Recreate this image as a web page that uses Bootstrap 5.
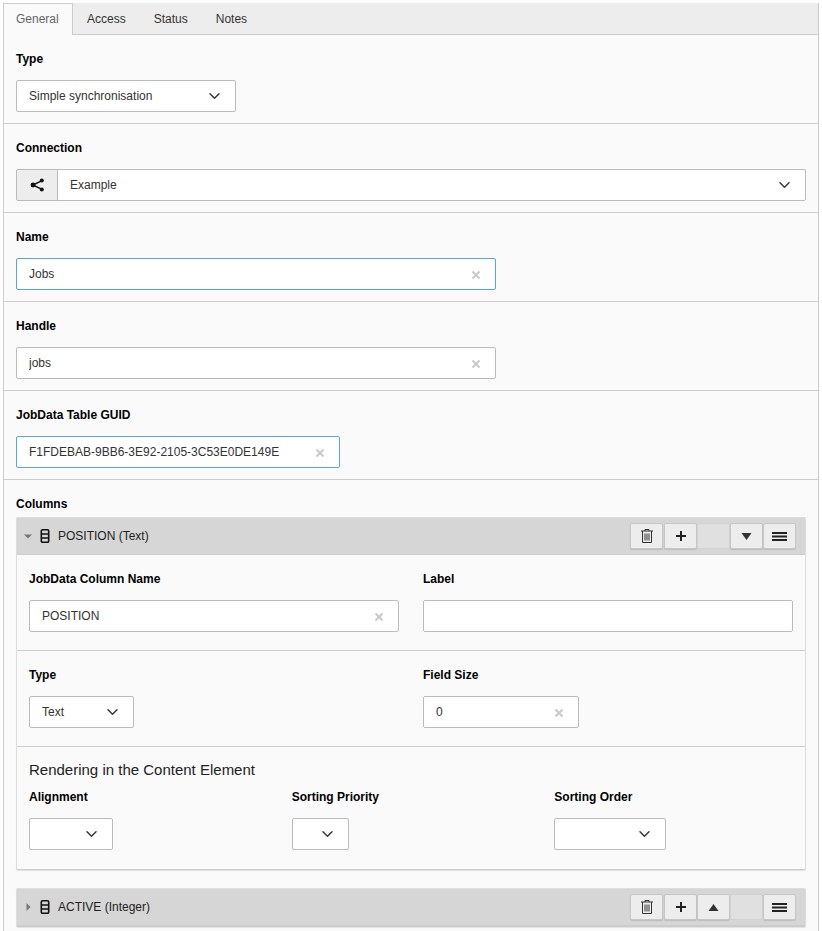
<!DOCTYPE html>
<html lang="en"><head><meta charset="utf-8"><title>Jobs</title>
<link href="https://cdn.jsdelivr.net/npm/bootstrap@5.3.0/dist/css/bootstrap.min.css" rel="stylesheet">
<style>
html,body{background:#fff;}
body{font-family:"Liberation Sans",Arial,sans-serif;font-size:12px;line-height:18px;color:#333;padding:3px 3px 0;margin:0;}
.frame{width:816px;background:#fafafa;border:solid #ccc;border-width:0 1px;}
.tabbar{background:#ededed;border:0;border-bottom:1px solid #ccc;height:32px;padding:0;flex-wrap:nowrap;}
.tabbar .nav-link{font-size:12px;line-height:18px;color:#333;padding:7px 14px 6px;border:0;border-radius:0;margin:0;height:32px;background:transparent;}
.tabbar .nav-link.active{color:#666;background:#fafafa;border:solid #ccc;border-width:1px 1px 0 0;height:32px;padding:6px 12px 7px 12px;width:69px;}
.sect{padding:15px 12px 11px;border-bottom:1px solid #ccc;height:89px;}
.sect.last{border-bottom:0;height:auto;padding-bottom:12px;}
.lbl{display:block;font-weight:700;color:#000;font-size:12px;line-height:18px;margin:0 0 12px;}
.lbl.colslbl{margin-bottom:4px;}
.form-select,.form-control{font-size:12px;line-height:18px;height:32px;padding:6px 12px;color:#333;border:1px solid #bbb;border-radius:2px;box-shadow:none;background-color:#fff;}
.form-select{background-size:15px 12px;background-position:right 13px center;padding-right:30px;}
.w-type{width:220px;}
.cbox{position:relative;}
.w-name{width:480px;}
.w-guid{width:324px;}
.w-size{width:156px;}
.w-text{width:105px;}
.w-align{width:84px;}
.w-prio{width:57px;}
.w-order{width:112px;}
.clr{position:absolute;right:15px;top:12px;width:10px;height:10px;}
.focusb{border-color:#5ba5dd;}
.conn .input-group-text{width:42px;height:32px;background:#ededed;border:1px solid #bbb;border-radius:2px 0 0 2px;justify-content:center;padding:0;}
.conn .form-select{border-radius:0 2px 2px 0;margin-left:-1px;}
.colpanel{--bs-card-border-color:#ccc;--bs-card-bg:#fafafa;--bs-card-border-radius:2px;--bs-card-inner-border-radius:1px;border:1px solid #ddd;border-bottom-color:#ccc;box-shadow:0 1px 1px rgba(0,0,0,.1);margin-bottom:18px;width:790px;}
.colhead{background:#d6d6d6;border:0;border-bottom:1px solid #ccc;height:37px;padding:0 9px 0 6px;color:#222;display:flex;align-items:center;}
.colhead .tri{width:10px;display:flex;justify-content:center;margin-right:7px;}
.colhead .ico{margin-right:8px;}
.toolbtns{margin-left:auto;display:flex;}
.tb{width:33px;height:26px;padding:0;background:#ededed;border:1px solid #c6c6c6;border-radius:2px;display:flex;align-items:center;justify-content:center;box-shadow:0 1px 1px rgba(0,0,0,.12);}
.tb.gapr{margin-right:1px;}
.tb.off{background:#e0e0e0;border-color:#d2d2d2;box-shadow:none;}
.inner{padding:15px 12px 18px;border-bottom:1px solid #ccc;height:96px;}
.inner.end{border-bottom:0;height:122px;padding-top:13px;}
.subhd{font-size:15px;line-height:20px;color:#222;margin:0 0 8px;font-weight:400;}
.collapsedp{margin-bottom:0;}
</style></head>
<body>
<div class="frame">
<ul class="nav nav-tabs tabbar">
<li class="nav-item"><a class="nav-link active" href="#">General</a></li>
<li class="nav-item"><a class="nav-link" href="#">Access</a></li>
<li class="nav-item"><a class="nav-link" href="#">Status</a></li>
<li class="nav-item"><a class="nav-link" href="#">Notes</a></li>
</ul>

<div class="sect"><label class="lbl">Type</label>
<select class="form-select w-type"><option>Simple synchronisation</option></select></div>

<div class="sect"><label class="lbl">Connection</label>
<div class="input-group conn"><span class="input-group-text">
<svg width="15" height="14" viewBox="0 0 15 14"><path d="M3 7 11.500 2.800M3 7l8.500 4.200" stroke="#111" stroke-width="1.400" fill="none"/><circle cx="3" cy="7" r="2.400" fill="#111"/><circle cx="11.800" cy="2.500" r="2" fill="#111"/><circle cx="11.800" cy="11.500" r="2" fill="#111"/></svg>
</span><select class="form-select"><option>Example</option></select></div></div>

<div class="sect"><label class="lbl">Name</label>
<div class="cbox w-name"><input class="form-control focusb" value="Jobs"><svg class="clr" viewBox="0 0 10 10"><path d="M1.500 1.500l7 7M8.500 1.500l-7 7" stroke="#c9c9c9" stroke-width="2" fill="none"/></svg></div></div>

<div class="sect"><label class="lbl">Handle</label>
<div class="cbox w-name"><input class="form-control" value="jobs"><svg class="clr" viewBox="0 0 10 10"><path d="M1.500 1.500l7 7M8.500 1.500l-7 7" stroke="#c9c9c9" stroke-width="2" fill="none"/></svg></div></div>

<div class="sect"><label class="lbl">JobData Table GUID</label>
<div class="cbox w-guid"><input class="form-control focusb" value="F1FDEBAB-9BB6-3E92-2105-3C53E0DE149E"><svg class="clr" viewBox="0 0 10 10"><path d="M1.500 1.500l7 7M8.500 1.500l-7 7" stroke="#c9c9c9" stroke-width="2" fill="none"/></svg></div></div>

<div class="sect last"><label class="lbl colslbl">Columns</label>

<div class="card colpanel">
<div class="colhead">
<span class="tri"><svg width="8" height="5" viewBox="0 0 8 5"><path d="M0 0.500h8L4 4.500z" fill="#777"/></svg></span>
<svg class="ico" width="10" height="14" viewBox="0 0 10 14"><path d="M2.500.8h5A1.200 1.200 0 0 1 8.700 2v10a1.200 1.200 0 0 1-1.200 1.200h-5A1.200 1.200 0 0 1 1.300 12V2A1.200 1.200 0 0 1 2.500.8zM1.300 5h7.400M1.300 9h7.400" stroke="#111" stroke-width="1.600" fill="none"/></svg>
<span>POSITION (Text)</span>
<div class="toolbtns">
<button type="button" class="tb gapr"><svg width="14" height="16" viewBox="0 0 14 16"><path d="M1 3h12M5 3V1.500h4V3M2.500 3v11.500h9V3M5 5.500v7M7 5.500v7M9 5.500v7" stroke="#333" stroke-width="1" fill="none"/></svg></button>
<button type="button" class="tb"><svg width="12" height="12" viewBox="0 0 12 12"><path d="M6 1v10M1 6h10" stroke="#222" stroke-width="2" fill="none"/></svg></button>
<button type="button" class="tb off"></button>
<button type="button" class="tb"><svg width="11" height="7" viewBox="0 0 11 7"><path d="M.5 0h10L5.500 7z" fill="#333"/></svg></button>
<button type="button" class="tb"><svg width="15" height="9" viewBox="0 0 15 9"><path d="M0 1h15M0 4.500h15M0 8h15" stroke="#222" stroke-width="2" fill="none"/></svg></button>
</div></div>

<div class="inner"><div class="row gx-4">
<div class="col-6"><label class="lbl">JobData Column Name</label><div class="cbox"><input class="form-control" value="POSITION"><svg class="clr" viewBox="0 0 10 10"><path d="M1.500 1.500l7 7M8.500 1.500l-7 7" stroke="#c9c9c9" stroke-width="2" fill="none"/></svg></div></div>
<div class="col-6"><label class="lbl">Label</label><input class="form-control"></div>
</div></div>

<div class="inner"><div class="row gx-4">
<div class="col-6"><label class="lbl">Type</label><select class="form-select w-text"><option>Text</option></select></div>
<div class="col-6"><label class="lbl">Field Size</label><div class="cbox w-size"><input class="form-control" value="0"><svg class="clr" viewBox="0 0 10 10"><path d="M1.500 1.500l7 7M8.500 1.500l-7 7" stroke="#c9c9c9" stroke-width="2" fill="none"/></svg></div></div>
</div></div>

<div class="inner end">
<h5 class="subhd">Rendering in the Content Element</h5>
<div class="row gx-4">
<div class="col-4"><label class="lbl">Alignment</label><select class="form-select w-align"><option></option></select></div>
<div class="col-4"><label class="lbl">Sorting Priority</label><select class="form-select w-prio"><option></option></select></div>
<div class="col-4"><label class="lbl">Sorting Order</label><select class="form-select w-order"><option></option></select></div>
</div></div>
</div>

<div class="card colpanel collapsedp">
<div class="colhead">
<span class="tri"><svg width="5" height="8" viewBox="0 0 5 8"><path d="M.5 0v8l4-4z" fill="#777"/></svg></span>
<svg class="ico" width="10" height="14" viewBox="0 0 10 14"><path d="M2.500.8h5A1.200 1.200 0 0 1 8.700 2v10a1.200 1.200 0 0 1-1.200 1.200h-5A1.200 1.200 0 0 1 1.300 12V2A1.200 1.200 0 0 1 2.500.8zM1.300 5h7.400M1.300 9h7.400" stroke="#111" stroke-width="1.600" fill="none"/></svg>
<span>ACTIVE (Integer)</span>
<div class="toolbtns">
<button type="button" class="tb gapr"><svg width="14" height="16" viewBox="0 0 14 16"><path d="M1 3h12M5 3V1.500h4V3M2.500 3v11.500h9V3M5 5.500v7M7 5.500v7M9 5.500v7" stroke="#333" stroke-width="1" fill="none"/></svg></button>
<button type="button" class="tb"><svg width="12" height="12" viewBox="0 0 12 12"><path d="M6 1v10M1 6h10" stroke="#222" stroke-width="2" fill="none"/></svg></button>
<button type="button" class="tb"><svg width="11" height="7" viewBox="0 0 11 7"><path d="M.5 7h10L5.500 0z" fill="#333"/></svg></button>
<button type="button" class="tb off"></button>
<button type="button" class="tb"><svg width="15" height="9" viewBox="0 0 15 9"><path d="M0 1h15M0 4.500h15M0 8h15" stroke="#222" stroke-width="2" fill="none"/></svg></button>
</div></div>
</div>
</div>
</div>
<script src="https://cdn.jsdelivr.net/npm/bootstrap@5.3.0/dist/js/bootstrap.bundle.min.js"></script>
</body></html>
